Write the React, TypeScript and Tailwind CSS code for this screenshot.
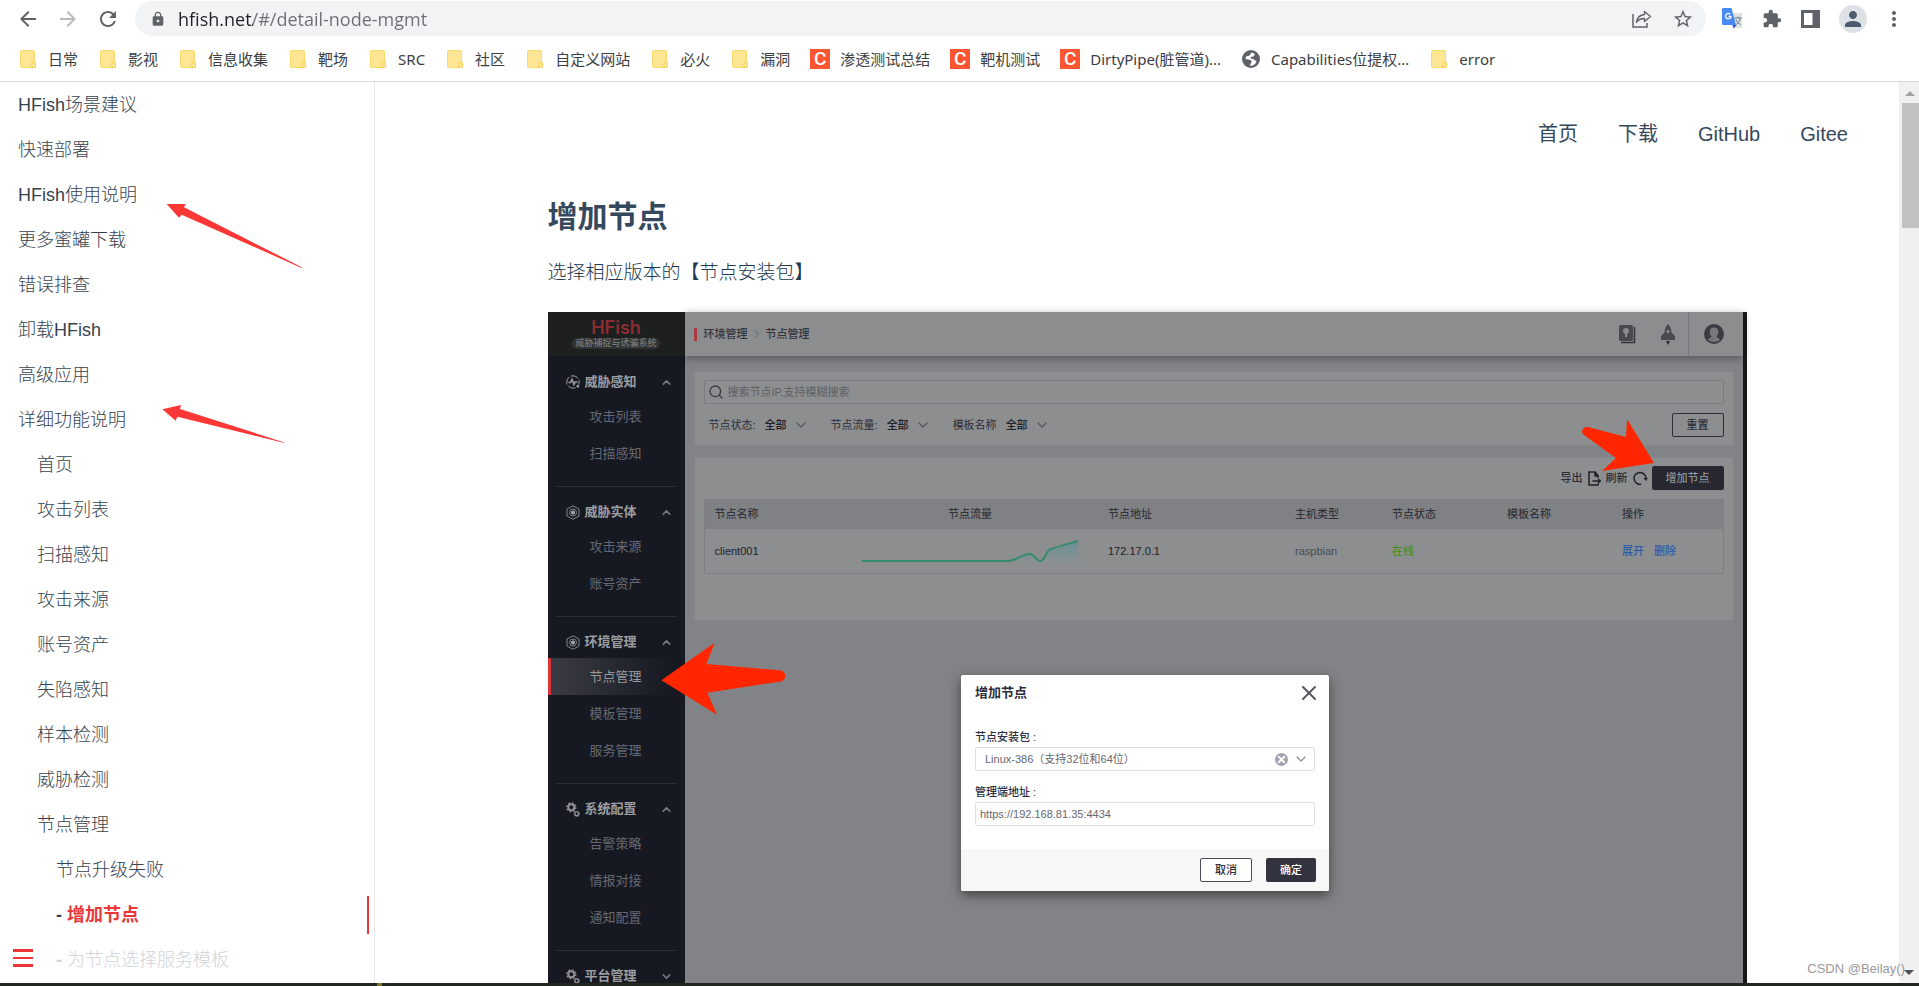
import React from "react";
import {
  MdArrowBack,
  MdArrowForward,
  MdExtension,
  MdLock,
  MdMoreVert,
  MdPerson,
  MdPublic,
  MdRefresh,
  MdStarOutline,
} from "react-icons/md";
import { ChevronDown, ChevronRight, ChevronUp, Search, X } from "lucide-react";

type Bookmark = { label: string; icon: "folder" | "csdn" | "globe" };

const bookmarks: Bookmark[] = [
  { label: "日常", icon: "folder" },
  { label: "影视", icon: "folder" },
  { label: "信息收集", icon: "folder" },
  { label: "靶场", icon: "folder" },
  { label: "SRC", icon: "folder" },
  { label: "社区", icon: "folder" },
  { label: "自定义网站", icon: "folder" },
  { label: "必火", icon: "folder" },
  { label: "漏洞", icon: "folder" },
  { label: "渗透测试总结", icon: "csdn" },
  { label: "靶机测试", icon: "csdn" },
  { label: "DirtyPipe(脏管道)...", icon: "csdn" },
  { label: "Capabilities位提权...", icon: "globe" },
  { label: "error", icon: "folder" },
];

const docsTop = [
  "HFish场景建议",
  "快速部署",
  "HFish使用说明",
  "更多蜜罐下载",
  "错误排查",
  "卸载HFish",
  "高级应用",
];

const docsFeatures = [
  "首页",
  "攻击列表",
  "扫描感知",
  "攻击来源",
  "账号资产",
  "失陷感知",
  "样本检测",
  "威胁检测",
];

const consoleMenu = [
  { title: "威胁感知", icon: "pulse", open: true, items: ["攻击列表", "扫描感知"] },
  { title: "威胁实体", icon: "hex", open: true, items: ["攻击来源", "账号资产"] },
  { title: "环境管理", icon: "hex", open: true, items: ["节点管理", "模板管理", "服务管理"] },
  { title: "系统配置", icon: "gears", open: true, items: ["告警策略", "情报对接", "通知配置"] },
  { title: "平台管理", icon: "gears", open: false, items: [] },
];

const filters = ["节点状态:", "节点流量:", "模板名称"];

const FolderIcon = () => (
  <svg width="16" height="18" viewBox="0 0 16 18">
    <rect x="0.5" y="0.5" width="14" height="17" rx="1" fill="#ffe694" stroke="#fad96b" />
    <path d="M13 12h1.500a1 1 0 0 1 1 1v3.500a1 1 0 0 1-1 1H12V13a1 1 0 0 1 1-1z" fill="#ffe694" stroke="#f5cf4f" />
  </svg>
);

const BookmarkIcon = ({ icon }: { icon: Bookmark["icon"] }) => {
  if (icon === "csdn") {
    return (
      <span className="flex size-5 items-center justify-center bg-[#fc5531] font-['Roboto',sans-serif] text-[19px] leading-5 font-medium text-white">
        C
      </span>
    );
  }
  if (icon === "globe") {
    return (
      <svg width="18" height="18" viewBox="0 0 18 18">
        <circle cx="9" cy="9" r="9" fill="#5f6368" />
        <path d="M9.500 2.500 7.500 5.500 4 6.500 3.500 9l3 .5 3 1v2L8 14.500 9 16c2.500-.5 4.500-2 5.500-4.500L12 9.500 9 8.500 8.500 7l3-.5L13 4.500c-1-1-2-1.700-3.500-2z" fill="#fff" />
      </svg>
    );
  }
  return <FolderIcon />;
};

const BrowserBar = () => (
  <header className="shrink-0 border-b border-[#d5d7da] bg-white font-['Open_Sans','Noto_Sans_CJK_SC',sans-serif]">
    <div className="flex h-[37px] items-center pr-[13px] pl-4">
      <button aria-label="后退" className="mr-4 text-[#5f6368]">
        <MdArrowBack className="size-6" />
      </button>
      <button aria-label="前进" className="mr-4 text-[#bababa]">
        <MdArrowForward className="size-6" />
      </button>
      <button aria-label="刷新" className="mr-[15px] text-[#5f6368]">
        <MdRefresh className="size-6" />
      </button>
      <div className="flex h-[35px] flex-1 items-center rounded-full bg-[#f1f3f4] pr-3 pl-[15px]">
        <MdLock className="mr-3 size-4 text-[#5f6368]" />
        <input
          aria-label="地址"
          defaultValue="hfish.net/#/detail-node-mgmt"
          className="min-w-0 flex-1 bg-linear-to-r from-[#202124] from-[75px] to-[#6b6f73] to-[75px] bg-clip-text text-[18px] leading-6 text-transparent outline-none"
        />
        <button aria-label="分享" className="mr-5 text-[#5f6368]">
          <svg width="20" height="18" viewBox="0 0 20 18" fill="none" stroke="currentColor">
            <path d="M1 4v13h14v-4" strokeWidth="1.5" />
            <path d="M12.500 1.500 18.500 6.500 12.500 11.500V8.500C8.500 8.500 6 10 4.500 12.500 5 8 8 5 12.500 4.500z" strokeWidth="1.400" strokeLinejoin="round" />
          </svg>
        </button>
        <button aria-label="收藏" className="text-[#5f6368]">
          <MdStarOutline className="size-[22px]" />
        </button>
      </div>
      <div className="ml-4 flex items-center gap-[19px] text-[#5f6368]">
        <button aria-label="翻译">
          <svg width="21" height="21" viewBox="0 0 21 21">
            <path d="M8 5h12v15H12z" fill="#dfe1e5" />
            <path d="M12.500 10h7M16 8.500V10M14 16.500c2.500-1.500 4-4 4.500-6.500M14 11.500c.8 2 2.500 4 4.500 5" stroke="#607d8b" fill="none" />
            <path d="M10.500 17h4l-3 3.500z" fill="#3050c8" />
            <path d="M1 0h8.500L14 17H1a1 1 0 0 1-1-1V1a1 1 0 0 1 1-1z" fill="#4a8af4" />
            <path d="M8.300 6.300a2.700 2.700 0 1 0 .7 2.200H6.500" stroke="#fff" strokeWidth="1.300" fill="none" />
          </svg>
        </button>
        <button aria-label="扩展程序">
          <MdExtension className="size-5" />
        </button>
        <button aria-label="侧边栏">
          <svg width="19" height="18" viewBox="0 0 19 18">
            <path d="M0 0h19v18H0zM3 3v12h8.500V3z" fill="currentColor" fillRule="evenodd" />
          </svg>
        </button>
        <button aria-label="用户" className="flex size-7 items-center justify-center rounded-full bg-[#dee1e6]">
          <MdPerson className="size-6 text-[#4d5b6e]" />
        </button>
        <button aria-label="更多">
          <MdMoreVert className="-ml-1 size-6" />
        </button>
      </div>
    </div>
    <nav className="flex h-11 items-center gap-5 overflow-hidden px-[18px] font-['Noto_Sans','Noto_Sans_CJK_SC',sans-serif]">
      {bookmarks.map((b) => (
        <a key={b.label} href="#" className="flex shrink-0 items-center gap-[10px] text-[15px] leading-5 text-[#3c4043]">
          <span className="flex w-5 justify-center">
            <BookmarkIcon icon={b.icon} />
          </span>
          {b.label}
        </a>
      ))}
    </nav>
  </header>
);

const DocLink = ({ children }: { children: React.ReactNode }) => (
  <a href="#" className="flex h-[45px] items-center">
    {children}
  </a>
);

const DocsSidebar = () => (
  <aside className="relative w-[375px] shrink-0 overflow-hidden border-r border-[#e8e8e8] text-[18px] leading-6 font-light text-[#36434f]">
    <ul className="pl-[18px]">
      {docsTop.map((t) => (
        <li key={t}>
          <DocLink>{t}</DocLink>
        </li>
      ))}
      <li>
        <DocLink>详细功能说明</DocLink>
        <ul className="pl-[19px]">
          {docsFeatures.map((t) => (
            <li key={t}>
              <DocLink>{t}</DocLink>
            </li>
          ))}
          <li>
            <DocLink>节点管理</DocLink>
            <ul className="pl-[19px]">
              <li>
                <DocLink>节点升级失败</DocLink>
              </li>
              <li className="flex h-[45px] items-center">
                <a
                  href="#"
                  className="mr-[5px] flex h-[38px] flex-1 items-center gap-[5px] border-r-2 border-[#ea3838] font-bold text-[#ea3838]"
                >
                  <span className="text-[#34495e]">-</span>增加节点
                </a>
              </li>
              <li className="text-[#d0d4d8]">
                <a href="#" className="flex h-[45px] items-center gap-[5px]">
                  <span className="font-bold">-</span>为节点选择服务模板
                </a>
              </li>
            </ul>
          </li>
        </ul>
      </li>
    </ul>

    {/* Hand-drawn pointers */}
    <svg className="absolute top-[121px] left-[166px]" width="138" height="66" viewBox="0 0 414 198" fill="#fc3836">
      <path d="M2 3h57l-5 10 356 181h-5L47 35l-8 9z" />
    </svg>
    <svg className="absolute top-[322px] left-[162px]" width="124" height="40" viewBox="0 0 372 120" fill="#fc3836">
      <path d="M1 16 57 3l-3 12 315 101h-5L46 38l-5 12z" />
    </svg>

    <button aria-label="切换菜单" className="absolute bottom-4 left-[13px] flex flex-col gap-[5px]">
      <span className="h-[3px] w-5 bg-[#ea3838]" />
      <span className="h-[2px] w-5 bg-[#ea3838]" />
      <span className="h-[3px] w-5 bg-[#ea3838]" />
    </button>
  </aside>
);

const MenuIcon = ({ name }: { name: string }) => {
  if (name === "pulse") {
    return (
      <svg width="14" height="14" viewBox="0 0 14 14" fill="none" stroke="#9c9da0">
        <circle cx="7" cy="7" r="6.200" strokeDasharray="8 1.740" strokeDashoffset="3" />
        <path d="M2.500 7.500h2l1.500-3 2 5 1.200-2.500h2.300" strokeWidth="1.600" />
        <circle cx="11.800" cy="11.300" r="1" fill="#9c9da0" />
      </svg>
    );
  }
  if (name === "hex") {
    return (
      <svg width="14" height="15" viewBox="0 0 14 15" fill="none" stroke="#84868b">
        <path d="M7 .8 13 4v7l-6 3.300L1 11V4z" />
        <circle cx="7" cy="7.500" r="3.500" />
        <path d="m7 5.300 2 1.100v2.200L7 9.700 5 8.600V6.400z" fill="#a4a5a8" stroke="none" />
      </svg>
    );
  }
  return (
    <svg width="14" height="15" viewBox="0 0 14 15" fill="none" stroke="#8f9094">
      <circle cx="5.300" cy="5.300" r="3" strokeWidth="2" />
      <circle cx="5.300" cy="5.300" r="4.500" strokeWidth="1.400" strokeDasharray="1.770 1.760" />
      <circle cx="10.800" cy="11.800" r="1.900" strokeWidth="1.400" />
      <circle cx="10.800" cy="11.800" r="2.800" strokeWidth=".8" strokeDasharray="1.100 1.100" />
    </svg>
  );
};

const ConsoleSidebar = () => (
  <aside className="w-[137px] shrink-0 bg-[#161922]">
    <div className="flex h-11 flex-col items-center bg-[#1e2020] pt-[7px]">
      <span className="font-['Inter',sans-serif] text-[18px] leading-[18px] font-semibold text-[#8c2c30]">HFish</span>
      <span className="mt-px rounded-full bg-[#303233] px-[3px] text-[9px] leading-[11px] text-[#85878a]">
        威胁捕捉与诱骗系统
      </span>
    </div>
    <div className="pt-px">
      {consoleMenu.map((section) => (
        <section key={section.title}>
          <button className="flex h-[41px] w-full items-center gap-[5px] pt-[9px] pr-3 pl-[18px] text-[13px] font-bold text-[#9c9da0]">
            <MenuIcon name={section.icon} />
            <span className="flex-1 text-left">{section.title}</span>
            {section.open ? (
              <ChevronUp className="size-[13px] text-[#74777f]" strokeWidth={3} />
            ) : (
              <ChevronDown className="size-[13px] text-[#74777f]" strokeWidth={3} />
            )}
          </button>
          {section.items.map((item) => (
            <a
              key={item}
              href="#"
              className={
                item === "节点管理"
                  ? "flex h-[37px] items-center border-l-[3px] border-[#d8343a] bg-linear-to-r from-[#3b3c43] to-[#161922] to-90% pl-[39px] text-[13px] text-[#98999c]"
                  : "flex h-[37px] items-center pl-[42px] text-[13px] text-[#666973]"
              }
            >
              {item}
            </a>
          ))}
          {section.open && <hr className="mx-2 mt-[14px] border-[#2b2e37]" />}
        </section>
      ))}
    </div>
  </aside>
);

const ConsoleHeader = () => (
  <div className="relative flex h-11 items-center bg-[#8c8d8f] pl-[9px] text-[11px] font-medium text-[#34353c] shadow-[0_2px_8px_rgba(0,0,0,0.35)]">
    <span className="mr-[7px] h-[13px] w-[3px] bg-[#a83c42]" />
    <a href="#">环境管理</a>
    <ChevronRight className="mx-[3px] size-3 text-[#5e5f64]" />
    <a href="#">节点管理</a>
    <div className="ml-auto flex h-full items-center">
      <svg className="mr-[25px]" width="17" height="19" viewBox="0 0 17 19">
        <path d="M15.500 2v15.500H2" fill="none" stroke="#34353c" strokeWidth="1.500" />
        <rect width="14" height="16" rx="1.500" fill="#494a50" />
        <circle cx="7" cy="6" r="3" fill="#8c8d8f" />
        <path d="M6 9h2v3H6z" fill="#8c8d8f" />
      </svg>
      <svg className="mr-[13px]" width="14" height="21" viewBox="0 0 14 21">
        <path d="M7 0c2.500 2.500 3.500 5 3.500 8.500L14 12v4H0v-4l3.500-3.500C3.500 5 4.500 2.500 7 0z" fill="#494a50" />
        <path d="M5 17h4l-2 4z" fill="#2b2c33" />
        <circle cx="7" cy="7.500" r="1.500" fill="#8c8d8f" />
      </svg>
      <span className="h-full w-px bg-[#77787b]" />
      <svg className="mr-[19px] ml-[15px]" width="20" height="20" viewBox="0 0 20 20">
        <circle cx="10" cy="10" r="10" fill="#3b3c43" />
        <path d="M10 3.500c3 0 4.300 2 4.300 4.500 0 2-.8 3.500-1.800 4.300.3 1.700 3 1.700 3.500 3.700-3 2.500-9 2.500-12 0 .5-2 3.200-2 3.500-3.700C6.500 11.500 5.700 10 5.700 8c0-2.500 1.300-4.500 4.300-4.500z" fill="#77787b" />
      </svg>
    </div>
  </div>
);

const FilterCard = () => (
  <div className="mx-[9px] mt-[15px] border border-[#85868a] bg-[#8d8e90] px-[9px] py-2">
    <label className="flex h-6 items-center gap-1 rounded-xs border border-[#7b7c80] px-[3px]">
      <Search className="size-4 text-[#3d3e45]" />
      <input
        aria-label="搜索节点"
        placeholder="搜索节点IP,支持模糊搜索"
        className="flex-1 text-[11px] text-[#34353c] outline-none placeholder:text-[#5e5f64]"
      />
    </label>
    <div className="mt-[9px] flex h-6 items-center gap-[26px] pl-[5px] text-[11px]">
      {filters.map((f) => (
        <label key={f} className="flex items-center gap-[9px] text-[#2c2d36]">
          {f}
          <span className="relative flex items-center">
            <select className="w-10 appearance-none font-medium text-[#202128]">
              <option>全部</option>
            </select>
            <ChevronDown className="pointer-events-none absolute -right-1 size-4 text-[#56575d]" />
          </span>
        </label>
      ))}
      <button className="ml-auto h-6 w-[52px] rounded-xs border border-[#2c2d36] font-medium text-[#2c2d36]">重置</button>
    </div>
  </div>
);

const NodeTable = () => (
  <div className="mx-[9px] mt-[11px] border border-[#85868a] bg-[#8d8e90] px-[9px] pt-2 pb-[46px] text-[11px]">
    <div className="flex h-6 items-center justify-end text-[#2c2d36]">
      <button className="mr-[5px] flex items-center gap-[5px] font-medium">
        导出
        <svg width="13" height="15" viewBox="0 0 13 15" fill="none" stroke="#202128" strokeWidth="1.500">
          <path d="M10 7V4.500L7 1H1v13h9v-1.500M7 1v4h3M4.500 10H12M10 8l2.300 2L10 12" />
        </svg>
      </button>
      <button className="mr-1 flex items-center gap-[5px] font-medium">
        刷新
        <svg width="15" height="15" viewBox="0 0 15 15" fill="none" stroke="#202128" strokeWidth="1.500">
          <path d="M8 13.300A6 6 0 1 1 13 8" />
          <path d="M10.500 7h4.300L13 10z" fill="#202128" stroke="none" />
        </svg>
      </button>
      <button className="h-6 w-[72px] rounded-xs bg-[#272831] font-medium text-[#8f9094]">增加节点</button>
    </div>
    <table className="mt-[9px] w-full table-fixed border border-[#7e7f83] text-left text-[#34353c]">
      <colgroup>
        <col className="w-[138px]" />
        <col />
        <col className="w-[187px]" />
        <col className="w-[97px]" />
        <col className="w-[115px]" />
        <col className="w-[115px]" />
        <col className="w-[111px]" />
      </colgroup>
      <thead className="bg-[#808184]">
        <tr className="h-[29px]">
          <th className="px-[10px] font-medium">节点名称</th>
          <th className="px-[10px] text-center font-medium">节点流量</th>
          <th className="px-[10px] font-medium">节点地址</th>
          <th className="px-[10px] font-medium">主机类型</th>
          <th className="px-[10px] font-medium">节点状态</th>
          <th className="px-[10px] font-medium">模板名称</th>
          <th className="px-[10px] font-medium">操作</th>
        </tr>
      </thead>
      <tbody>
        <tr className="h-[45px]">
          <td className="px-[10px] text-[#202128]">client001</td>
          <td className="px-[10px]">
            <svg className="mx-auto" width="218" height="24" viewBox="0 0 218 24" fill="none">
              <defs>
                <linearGradient id="traffic" x1="0" y1="0" x2="0" y2="1">
                  <stop offset="0" stopColor="#6a9095" />
                  <stop offset="1" stopColor="#8a9193" />
                </linearGradient>
              </defs>
              <path d="M152 23c6-1 11-7 17-7s7 7 11 7c5 0 5-8 9-11l28-10v21z" fill="url(#traffic)" />
              <path d="M1 22h143c10 1 18-7 24-7s7 7 11 7c5 0 5-8 9-11 3-2 22-7 29-9" stroke="#348a6c" strokeWidth="2" />
            </svg>
          </td>
          <td className="px-[10px] text-[#202128]">172.17.0.1</td>
          <td className="px-[10px] text-[#4a4b51]">raspbian</td>
          <td className="px-[10px] font-medium text-[#4a9020]">在线</td>
          <td />
          <td className="px-[10px] font-medium text-[#2f5ca8]">
            <a href="#" className="mr-[10px]">
              展开
            </a>
            <a href="#">删除</a>
          </td>
        </tr>
      </tbody>
    </table>
  </div>
);

const AddNodeDialog = () => (
  <div
    role="dialog"
    aria-label="增加节点"
    className="w-[368px] rounded-xs bg-white text-[11px] leading-4 text-[#2c2d3c] shadow-[0_4px_12px_rgba(0,0,0,0.5)]"
  >
    <div className="flex h-9 items-center justify-between pr-2 pl-[14px]">
      <h2 className="text-[13px] font-bold">增加节点</h2>
      <button aria-label="关闭" className="text-[#55565f]">
        <X className="size-6" strokeWidth={2} />
      </button>
    </div>
    <div className="px-[14px] pt-[18px] pb-[23px]">
      <label htmlFor="pkg" className="block font-medium">
        节点安装包 :
      </label>
      <div className="relative mt-[2px] flex items-center">
        <select
          id="pkg"
          className="h-6 w-full appearance-none rounded-xs border border-[#dfdfe3] px-[9px] text-[#66676f]"
        >
          <option>Linux-386（支持32位和64位）</option>
        </select>
        <button
          aria-label="清除"
          className="absolute right-[27px] flex size-[13px] items-center justify-center rounded-full bg-[#a2a2b0] text-white"
        >
          <X className="size-[11px]" strokeWidth={4} />
        </button>
        <ChevronDown className="pointer-events-none absolute right-[6px] size-4 text-[#8f909c]" />
      </div>
      <label htmlFor="addr" className="mt-[13px] block font-medium">
        管理端地址 :
      </label>
      <input
        id="addr"
        defaultValue="https://192.168.81.35:4434"
        className="mt-[2px] h-6 w-full rounded-xs border border-[#dfdfe3] px-1 text-[#66676f] outline-none"
      />
    </div>
    <div className="flex h-[42px] items-center justify-end gap-[14px] rounded-b-xs bg-[#f7f7f8] pr-[13px]">
      <button className="h-6 w-[52px] rounded-xs border border-[#4a4b58] bg-white font-medium">取消</button>
      <button className="h-6 w-[50px] rounded-xs bg-[#32333f] font-medium text-white">确定</button>
    </div>
  </div>
);

const ConsoleShot = () => (
  <div className="relative flex border-r-4 border-[#171918] bg-[#828386]">
    <ConsoleSidebar />
    <div className="min-w-0 flex-1">
      <ConsoleHeader />
      <FilterCard />
      <NodeTable />
    </div>

    <div className="absolute inset-x-0 top-[363px] flex justify-center">
      <AddNodeDialog />
    </div>

    <svg className="absolute top-[330px] left-[113px]" width="125" height="74" viewBox="0 0 375 222" fill="#ff2600">
      <path d="M1 115 161 2l-25 64 220 19a17 17 0 0 1 0 34L139 152l29 66z" />
    </svg>
    <svg className="absolute top-[106px] right-[88px]" width="74" height="54" viewBox="0 0 74 54" fill="#ff2600">
      <path d="M73 45 46 1l-1 18L7 9C2 8-1 14 3 17l32 23-14 13z" />
    </svg>
  </div>
);

const Scrollbar = () => (
  <div className="flex w-5 shrink-0 flex-col items-end bg-[#f0f0f0]">
    <svg width="18" height="21" viewBox="0 0 18 21">
      <path d="M4 14h10L9 9z" fill="#a3a3a3" />
    </svg>
    <div className="h-[125px] w-[17px] bg-[#c1c1c1]" />
    <svg className="mt-auto" width="19" height="21" viewBox="0 0 19 21">
      <path d="M4 8h10l-5 5z" fill="#505050" />
    </svg>
  </div>
);

export default function App() {
  return (
    <div className="flex h-screen flex-col overflow-hidden bg-white font-['Liberation_Sans','Noto_Sans_CJK_SC',sans-serif]">
      <BrowserBar />
      <div className="relative flex min-h-0 flex-1">
        <DocsSidebar />
        <main className="min-w-0 flex-1 overflow-hidden pl-5 text-[#34495e]">
          <nav className="flex justify-end gap-10 pt-10 pr-[51px] text-[20px] leading-6">
            <a href="#">首页</a>
            <a href="#">下载</a>
            <a href="#">GitHub</a>
            <a href="#">Gitee</a>
          </nav>
          <article className="mx-auto max-w-[1199px] pt-[51px]">
            <h1 className="text-[30px] leading-10 font-bold">增加节点</h1>
            <p className="mt-6 mb-[27px] text-[19px] leading-6 font-light text-[#22384e]">选择相应版本的【节点安装包】</p>
            <ConsoleShot />
          </article>
        </main>
        <Scrollbar />
        <span className="absolute right-[14px] bottom-[6px] text-[13px] leading-4 text-[#999]">CSDN @Beilay()</span>
      </div>
      <div className="h-[3px] shrink-0 bg-[#22271f]">
        <div className="ml-[377px] h-full w-[5px] bg-[#7d7526]" />
      </div>
    </div>
  );
}
